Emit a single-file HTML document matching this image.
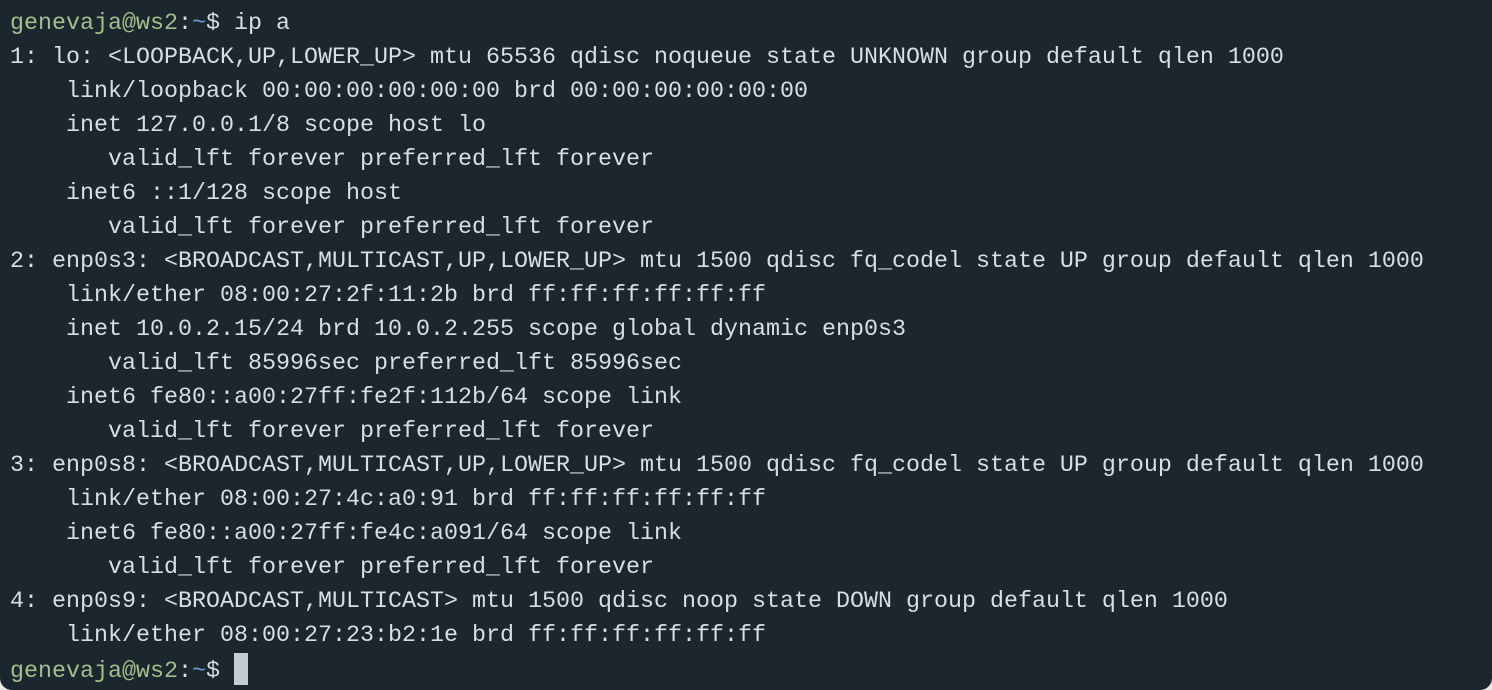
<!DOCTYPE html>
<html><head><style>
html,body{margin:0;padding:0;background:#e8e8e8;}
.t{position:relative;width:1492px;height:690px;background:#1c262e;border-radius:0 0 12px 12px;overflow:hidden;}
pre{margin:0;position:absolute;left:10px;top:7px;font-family:"Liberation Mono",monospace;font-size:23.33px;line-height:34px;color:#d8dee6;}
.g{color:#a3c08c}.b{color:#6fa3d8}
.c{display:inline-block;width:14px;height:32px;background:#c5cbd3;vertical-align:-8px;}
</style></head><body><div class="t"><pre><span class="g">genevaja@ws2</span>:<span class="b">~</span>$ ip a
1: lo: &lt;LOOPBACK,UP,LOWER_UP&gt; mtu 65536 qdisc noqueue state UNKNOWN group default qlen 1000
    link/loopback 00:00:00:00:00:00 brd 00:00:00:00:00:00
    inet 127.0.0.1/8 scope host lo
       valid_lft forever preferred_lft forever
    inet6 ::1/128 scope host
       valid_lft forever preferred_lft forever
2: enp0s3: &lt;BROADCAST,MULTICAST,UP,LOWER_UP&gt; mtu 1500 qdisc fq_codel state UP group default qlen 1000
    link/ether 08:00:27:2f:11:2b brd ff:ff:ff:ff:ff:ff
    inet 10.0.2.15/24 brd 10.0.2.255 scope global dynamic enp0s3
       valid_lft 85996sec preferred_lft 85996sec
    inet6 fe80::a00:27ff:fe2f:112b/64 scope link
       valid_lft forever preferred_lft forever
3: enp0s8: &lt;BROADCAST,MULTICAST,UP,LOWER_UP&gt; mtu 1500 qdisc fq_codel state UP group default qlen 1000
    link/ether 08:00:27:4c:a0:91 brd ff:ff:ff:ff:ff:ff
    inet6 fe80::a00:27ff:fe4c:a091/64 scope link
       valid_lft forever preferred_lft forever
4: enp0s9: &lt;BROADCAST,MULTICAST&gt; mtu 1500 qdisc noop state DOWN group default qlen 1000
    link/ether 08:00:27:23:b2:1e brd ff:ff:ff:ff:ff:ff
<span class="g">genevaja@ws2</span>:<span class="b">~</span>$ <span class="c"></span></pre></div></body></html>
